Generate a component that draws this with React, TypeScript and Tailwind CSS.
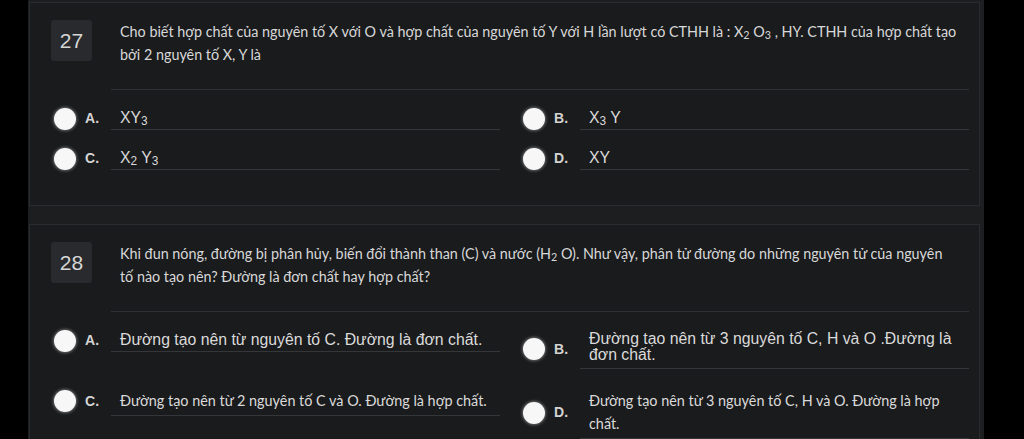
const calibri = "font-['Lato','Liberation_Sans',sans-serif]";
const arial = "font-['Liberation_Sans','Arial',sans-serif]";

type Opt = {
    key: string;
    body: React.ReactNode;
    kind?: "arial" | "arial2" | "calibri";
};

const Radio = () => (
    <span className="block w-[22px] h-[22px] shrink-0 rounded-full bg-[#f7f7f7] shadow-[0_0_3px_1px_rgba(255,255,255,0.35)]" />
);

const Option = ({ opt }: { opt: Opt }) => {
    const kind = opt.kind ?? "arial";
    const textCls =
        kind === "calibri"
            ? `${calibri} text-[14.4px] leading-[23px] pt-[3px] pb-[3px]`
            : kind === "arial2"
              ? `${arial} text-[15.8px] leading-[16px] pt-[2px] pb-[5px]`
              : `${arial} text-[15.8px] leading-[21px] pb-[1px]`;
    return (
        <div className="flex items-center">
            <Radio />
            <span className={`${arial} w-[35px] pl-[9px] text-[14px] font-bold text-[#d4d4d4] shrink-0`}>
                {opt.key}.
            </span>
            <div className={`flex-1 border-b border-[#34363a] pl-[9px] text-[#dadada] ${textCls}`}>
                {opt.body}
            </div>
        </div>
    );
};

const Question = ({
    num,
    text,
    options,
}: {
    num: number;
    text: React.ReactNode;
    options: Opt[];
}) => (
    <div className="ml-px mr-[4px] border border-[#2a2b2e] bg-[#1a1b1d] pt-[17px] pb-[35px]">
        <div className="flex items-start pl-[21px] pr-[20px]">
            <div className={`${arial} w-[41px] h-[41px] shrink-0 rounded-[3px] bg-[#282a2d] flex items-center justify-center text-[21px] text-[#d6d6d6]`}>
                {num}
            </div>
            <p className={`${calibri} ml-[28px] text-[14.35px] leading-[23px] text-[#d8d8d8] whitespace-nowrap`}>{text}</p>
        </div>
        <div className="ml-[81px] mr-[10px] mt-[23px] border-t border-[#2f3033]" />
        <div className="grid grid-cols-2 items-start gap-x-[23px] gap-y-[17px] pl-[24px] pr-[10px] mt-[17px]">
            {options.map((o) => (
                <Option key={o.key} opt={o} />
            ))}
        </div>
    </div>
);

const Sub = ({ children }: { children: React.ReactNode }) => (
    <sub className="text-[0.75em] relative top-[2px] align-baseline">{children}</sub>
);

export default function App() {
    return (
        <div className="w-[1024px] h-[439px] overflow-hidden bg-black">
            <div className="ml-[28px] w-[956px] h-full bg-[#1d1e20] flex flex-col gap-[18px] pt-[2px]">
                <Question
                    num={27}
                    text={
                        <>
                            Cho biết hợp chất của nguyên tố X với O và hợp chất của nguyên tố Y với H lần lượt có CTHH là : X<Sub>2</Sub> O<Sub>3</Sub> , HY. CTHH của hợp chất tạo
                            <br />
                            bởi 2 nguyên tố X, Y là
                        </>
                    }
                    options={[
                        { key: "A", body: <>XY<Sub>3</Sub></> },
                        { key: "B", body: <>X<Sub>3</Sub> Y</> },
                        { key: "C", body: <>X<Sub>2</Sub> Y<Sub>3</Sub></> },
                        { key: "D", body: <>XY</> },
                    ]}
                />
                <Question
                    num={28}
                    text={
                        <>
                            Khi đun nóng, đường bị phân hủy, biến đổi thành than (C) và nước (H<Sub>2</Sub> O). Như vậy, phân tử đường do những nguyên tử của nguyên
                            <br />
                            tố nào tạo nên? Đường là đơn chất hay hợp chất?
                        </>
                    }
                    options={[
                        { key: "A", body: <>Đường tạo nên từ nguyên tố C. Đường là đơn chất.</> },
                        {
                            key: "B",
                            kind: "arial2",
                            body: (
                                <>
                                    Đường tạo nên từ 3 nguyên tố C, H và O .Đường là
                                    <br />
                                    đơn chất.
                                </>
                            ),
                        },
                        { key: "C", kind: "calibri", body: <>Đường tạo nên từ 2 nguyên tố C và O. Đường là hợp chất.</> },
                        {
                            key: "D",
                            kind: "calibri",
                            body: (
                                <>
                                    Đường tạo nên từ 3 nguyên tố C, H và O. Đường là hợp
                                    <br />
                                    chất.
                                </>
                            ),
                        },
                    ]}
                />
            </div>
        </div>
    );
}
